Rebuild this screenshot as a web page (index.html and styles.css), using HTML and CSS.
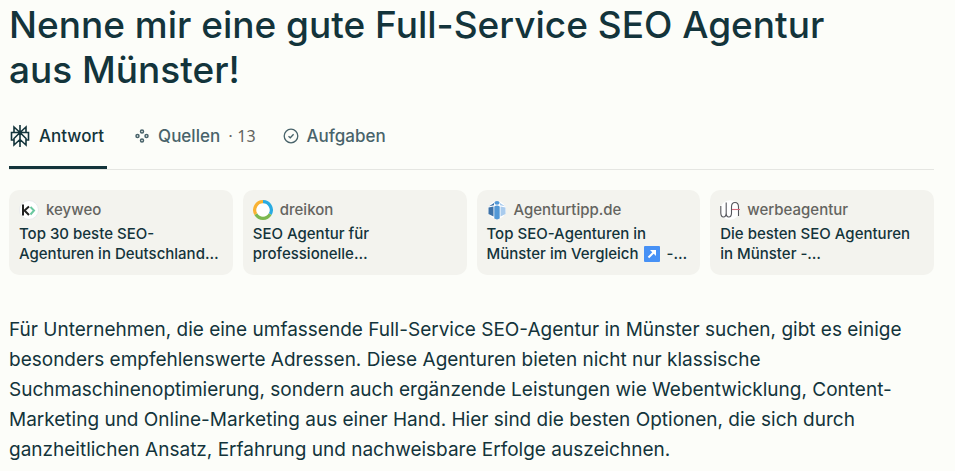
FILE: index.html
```html
<!DOCTYPE html>
<html lang="de">
<head>
    <meta charset="UTF-8">
    <meta name="viewport" content="width=device-width, initial-scale=1.0">
    <title>Nenne mir eine gute Full-Service SEO Agentur aus Münster!</title>
    <link rel="stylesheet" href="styles.css">
</head>
<body>
    <main class="thread">
        <h1 class="thread-title">Nenne mir eine gute Full-Service SEO Agentur aus Münster!</h1>

        <nav class="tabs">
            <a class="tab tab-active" href="#antwort">
                <svg class="tab-icon tab-icon-large" viewBox="0 0 22 22" fill="none" stroke="currentColor" stroke-width="1.6" aria-hidden="true">
                    <path d="M11 0v22M11 7.500L5 2v5.500M11 7.500L17 2v5.500M5 15H2.500V7.500h17V15H17M11 7.500l-6 6V20l6-5.500M11 7.500l6 6V20l-6-5.500"/>
                </svg>
                <span>Antwort</span>
            </a>
            <a class="tab" href="#quellen">
                <svg class="tab-icon" viewBox="0 0 16 16" fill="none" stroke="currentColor" stroke-width="1.500" aria-hidden="true">
                    <circle cx="8" cy="3.500" r="1.500"/>
                    <circle cx="12.500" cy="8" r="1.500"/>
                    <circle cx="8" cy="12.500" r="1.500"/>
                    <circle cx="3.500" cy="8" r="1.500"/>
                </svg>
                <span>Quellen</span>
                <span class="tab-count">· <span class="tab-number">13</span></span>
            </a>
            <a class="tab" href="#aufgaben">
                <svg class="tab-icon" viewBox="0 0 16 16" fill="none" stroke="currentColor" stroke-width="1.300" aria-hidden="true">
                    <circle cx="8" cy="8" r="6.800"/>
                    <path d="M5.500 8.200l1.800 1.600 3.300-3.600"/>
                </svg>
                <span>Aufgaben</span>
            </a>
        </nav>

        <section class="sources" aria-label="Quellen">
            <a class="source" href="#keyweo">
                <span class="source-site">
                    <svg class="source-icon" viewBox="0 0 20 20" fill="none" aria-hidden="true">
                        <circle cx="10" cy="10" r="9.500" fill="#fff" stroke="#e9eaed"/>
                        <path d="M4 4.500v11M10 6.500L5.500 10.500 10 15" stroke="#222" stroke-width="2"/>
                        <path d="M11.500 7l3.500 3.500-3.500 4" stroke="#6bc8a0" stroke-width="2"/>
                    </svg>
                    <span>keyweo</span>
                </span>
                <span class="source-title">Top 30 beste SEO-Agenturen in Deutschland…</span>
            </a>
            <a class="source" href="#dreikon">
                <span class="source-site">
                    <svg class="source-icon" viewBox="0 0 20 20" fill="none" stroke-width="3.200" aria-hidden="true">
                        <circle cx="10" cy="10" r="8" fill="#fff"/>
                        <path d="M10 1.700a8.300 8.300 0 0 1 7.200 12.450" stroke="#29abe2"/>
                        <path d="M17.200 14.150a8.300 8.300 0 0 1-14.400 0" stroke="#7cb850"/>
                        <path d="M2.800 14.150A8.300 8.300 0 0 1 10 1.700" stroke="#f9b233"/>
                    </svg>
                    <span>dreikon</span>
                </span>
                <span class="source-title">SEO Agentur für professionelle…</span>
            </a>
            <a class="source" href="#agenturtipp">
                <span class="source-site">
                    <svg class="source-icon" viewBox="0 0 20 20" aria-hidden="true">
                        <circle cx="10" cy="10" r="9" fill="#fff"/>
                        <path d="M1.500 7.500l5-1v10l-5-2.500zM2 6.300L7 3v2.300z" fill="#3d72a8"/>
                        <path d="M18.500 7.500l-5-1v10l5-2.500zM18 6.300L13 3v2.300z" fill="#a9cbed"/>
                        <path d="M7.300 6.500q2.700-1.800 5.400 0v12L10 19.500l-2.700-1z" fill="#5298d6"/>
                        <ellipse cx="10" cy="2.800" rx="2.600" ry="1.900" fill="#5298d6"/>
                    </svg>
                    <span>Agenturtipp.de</span>
                </span>
                <span class="source-title">Top SEO-Agenturen in Münster im Vergleich
                    <svg class="arrow-badge" viewBox="0 0 16 16" role="img" aria-label="Pfeil nach rechts oben">
                        <rect width="16" height="16" rx="1" fill="#4791f5"/>
                        <path d="M4.500 11.500L10 6" stroke="#fff" stroke-width="2"/>
                        <path d="M6 4h6v6z" fill="#fff"/>
                    </svg>
                    -…</span>
            </a>
            <a class="source" href="#werbeagentur">
                <span class="source-site">
                    <svg class="source-icon" viewBox="0 0 20 20" fill="none" stroke="#55565c" stroke-width="1.100" aria-hidden="true">
                        <circle cx="10" cy="10" r="9.800" fill="#fff" stroke="none"/>
                        <path d="M.8 6v7q.2 4 2.700 4t2.700-4V2.500M6.200 13q0 4 2.600 4t2.700-4V7q0-4.500 3.500-4.500t3.500 4.500v9"/>
                        <path d="M12 9.500h8" stroke="#d66a7d"/>
                    </svg>
                    <span>werbeagentur</span>
                </span>
                <span class="source-title">Die besten SEO Agenturen in Münster -…</span>
            </a>
        </section>

        <p class="answer">Für Unternehmen, die eine umfassende Full-Service SEO-Agentur in Münster suchen, gibt es einige besonders empfehlenswerte Adressen. Diese Agenturen bieten nicht nur klassische Suchmaschinenoptimierung, sondern auch ergänzende Leistungen wie Webentwicklung, Content-Marketing und Online-Marketing aus einer Hand. Hier sind die besten Optionen, die sich durch ganzheitlichen Ansatz, Erfahrung und nachweisbare Erfolge auszeichnen.</p>
    </main>
</body>
</html>
```
FILE: styles.css
```css
* {
    margin: 0;
    padding: 0;
    box-sizing: border-box;
}

body {
    font-family: Inter, "Liberation Sans", sans-serif;
    background-color: #fcfdf9;
    color: #13343b;
}

a {
    color: inherit;
    text-decoration: none;
}

.thread {
    padding: 2px 21px 7px 9px;
}

.thread-title {
    max-width: 24em;
    font-size: 37px;
    font-weight: 500;
    line-height: 45px;
}

.tabs {
    display: flex;
    gap: 27px;
    margin-top: 16px;
    border-bottom: 1px solid #e5e6e2;
}

.tab {
    display: flex;
    align-items: center;
    gap: 8px;
    height: 61px;
    padding-bottom: 6px;
    font-size: 17px;
    font-weight: 500;
    color: #48636a;
}

.tab-active {
    padding-right: 3px;
    padding-bottom: 3px;
    margin-bottom: -1px;
    border-bottom: 3px solid #13343b;
    color: #13343b;
}

.tab-icon {
    width: 16px;
    height: 16px;
}

.tab-icon-large {
    width: 22px;
    height: 22px;
}

.tab-count {
    font-size: 16px;
    font-weight: 400;
    color: #64645f;
}

.tab-number {
    font-family: "Noto Sans", sans-serif;
}

.sources {
    display: grid;
    grid-template-columns: repeat(4, 1fr);
    gap: 10px;
    margin-top: 20px;
}

.source {
    padding: 10px 10px 11px;
    border-radius: 10px;
    background-color: #f3f3ee;
    font-size: 15px;
    font-weight: 500;
    line-height: 20px;
}

.source-site {
    display: flex;
    align-items: center;
    gap: 7px;
    margin-bottom: 4px;
    color: #64645f;
}

.source-icon {
    width: 20px;
    height: 20px;
}

.source-title {
    display: block;
}

.arrow-badge {
    width: 16px;
    height: 16px;
    margin: 0 2px;
    vertical-align: -3px;
}

.answer {
    margin-top: 40px;
    font-size: 19px;
    line-height: 30px;
}
```
